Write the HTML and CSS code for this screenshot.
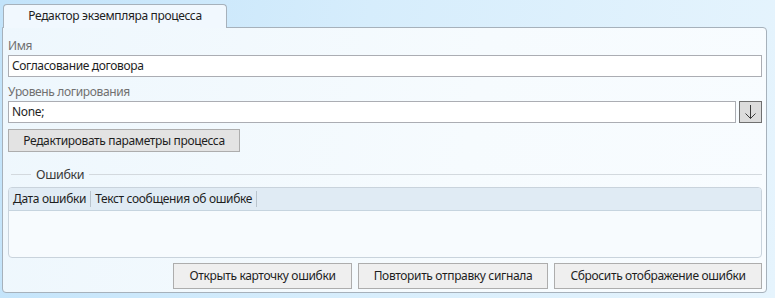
FILE: index.html
```html
<!DOCTYPE html>
<html lang="ru">
<head>
  <meta charset="UTF-8">
  <title>Редактор экземпляра процесса</title>
  <link rel="stylesheet" href="styles.css">
</head>
<body>
<div class="window">
  <div class="tabs">
    <div class="tab">Редактор экземпляра процесса</div>
  </div>
  <div class="panel">
    <div class="label">Имя</div>
    <div class="input">Согласование договора</div>

    <div class="label next">Уровень логирования</div>
    <div class="row">
      <div class="input grow">None;</div>
      <div class="arrow-btn">
        <svg width="21" height="20" viewBox="0 0 21 20">
          <path d="M10.5 3 V16.5 M5.5 11.5 L10.5 16.5 L15.5 11.5" fill="none" stroke="#3a3a3a" stroke-width="1"/>
        </svg>
      </div>
    </div>

    <div class="btn edit-btn">Редактировать параметры процесса</div>

    <!-- группа ошибок -->
    <div class="group-head">
      <span class="line short"></span>
      <span class="group-title">Ошибки</span>
      <span class="line"></span>
    </div>

    <div class="grid">
      <div class="grid-head">
        <div class="col">Дата ошибки</div>
        <div class="col">Текст сообщения об ошибке</div>
      </div>
      <div class="grid-body"></div>
    </div>

    <div class="actions">
      <div class="btn act w1">Открыть карточку ошибки</div>
      <div class="btn act w2">Повторить отправку сигнала</div>
      <div class="btn act w3">Сбросить отображение ошибки</div>
    </div>
  </div>
</div>
</body>
</html>
```

FILE: styles.css
```css
* {
  margin: 0;
  padding: 0;
  box-sizing: border-box;
}

body {
  font-family: "Noto Sans", "Open Sans", sans-serif;
  font-size: 12px;
  letter-spacing: -0.35px;
  color: #1e1e1e;
}

.window {
  width: 775px;
  height: 298px;
  padding: 4px 8px 0 2px;
  background: linear-gradient(100deg, #c2e3fa 0%, #d6edfc 45%, #e6f4fd 100%);
}

.tabs {
  display: flex;
  padding-left: 1px;
}

.tab {
  width: 224px;
  height: 24px;
  line-height: 22px;
  text-align: center;
  background: #f1f8fe;
  border: 1px solid #a6b1bb;
  border-bottom: 0;
  border-radius: 4px 4px 0 0;
  position: relative;
  z-index: 1;
  margin-bottom: -1px;
}

.panel {
  height: 266px;
  border: 1px solid #a6b1bb;
  border-radius: 0 4px 4px 4px;
  background: linear-gradient(100deg, #eef7fd 0%, #f6fbfe 60%, #f8fcff 100%);
  padding: 7px 4px 0 5px;
}

.label {
  height: 18px;
  line-height: 18px;
  color: #707070;
  margin-top: 2px;
}

.label.next {
  margin-top: 6px;
}

.input {
  height: 22px;
  line-height: 20px;
  padding-left: 3px;
  background: #fff;
  border: 1px solid #abadb3;
}

.row {
  display: flex;
  gap: 3px;
}

.grow {
  flex: 1;
}

.arrow-btn {
  width: 23px;
  height: 22px;
  border: 1px solid #707070;
  background: #dcdcdc;
  display: flex;
  align-items: center;
  justify-content: center;
}

.btn {
  height: 23px;
  line-height: 21px;
  text-align: center;
  background: #ededed;
  border: 1px solid #adadad;
}

.edit-btn {
  width: 232px;
  margin-top: 6px;
  background: #e3e3e3;
}

.group-head {
  display: flex;
  align-items: center;
  height: 18px;
  margin-top: 13px;
  padding: 0 0 0 3px;
}

.line {
  flex: 1;
  height: 1px;
  background: #d3d9de;
}

.line.short {
  flex: none;
  width: 20px;
}

.group-title {
  padding: 0 5px 0 5px;
  color: #3a3a3a;
  font-size: 12.5px;
}

.grid {
  margin-top: 4px;
  height: 71px;
  border: 1px solid #c9d3dc;
  border-radius: 4px;
  background: #f7fbfe;
  overflow: hidden;
}

.grid-head {
  display: flex;
  height: 23px;
  background: #e0ebf4;
  border-bottom: 1px solid #c6d4df;
}

.col {
  padding: 0 4px;
  border-right: 1px solid #b9c4cd;
  margin: 3px 0;
  line-height: 16px;
}

.actions {
  display: flex;
  justify-content: flex-end;
  gap: 6px;
  margin-top: 5px;
}

.act {
  height: 26px;
  line-height: 24px;
  background: #efefef;
}

.w1 { width: 179px; }
.w2 { width: 190px; }
.w3 { width: 208px; }
```
